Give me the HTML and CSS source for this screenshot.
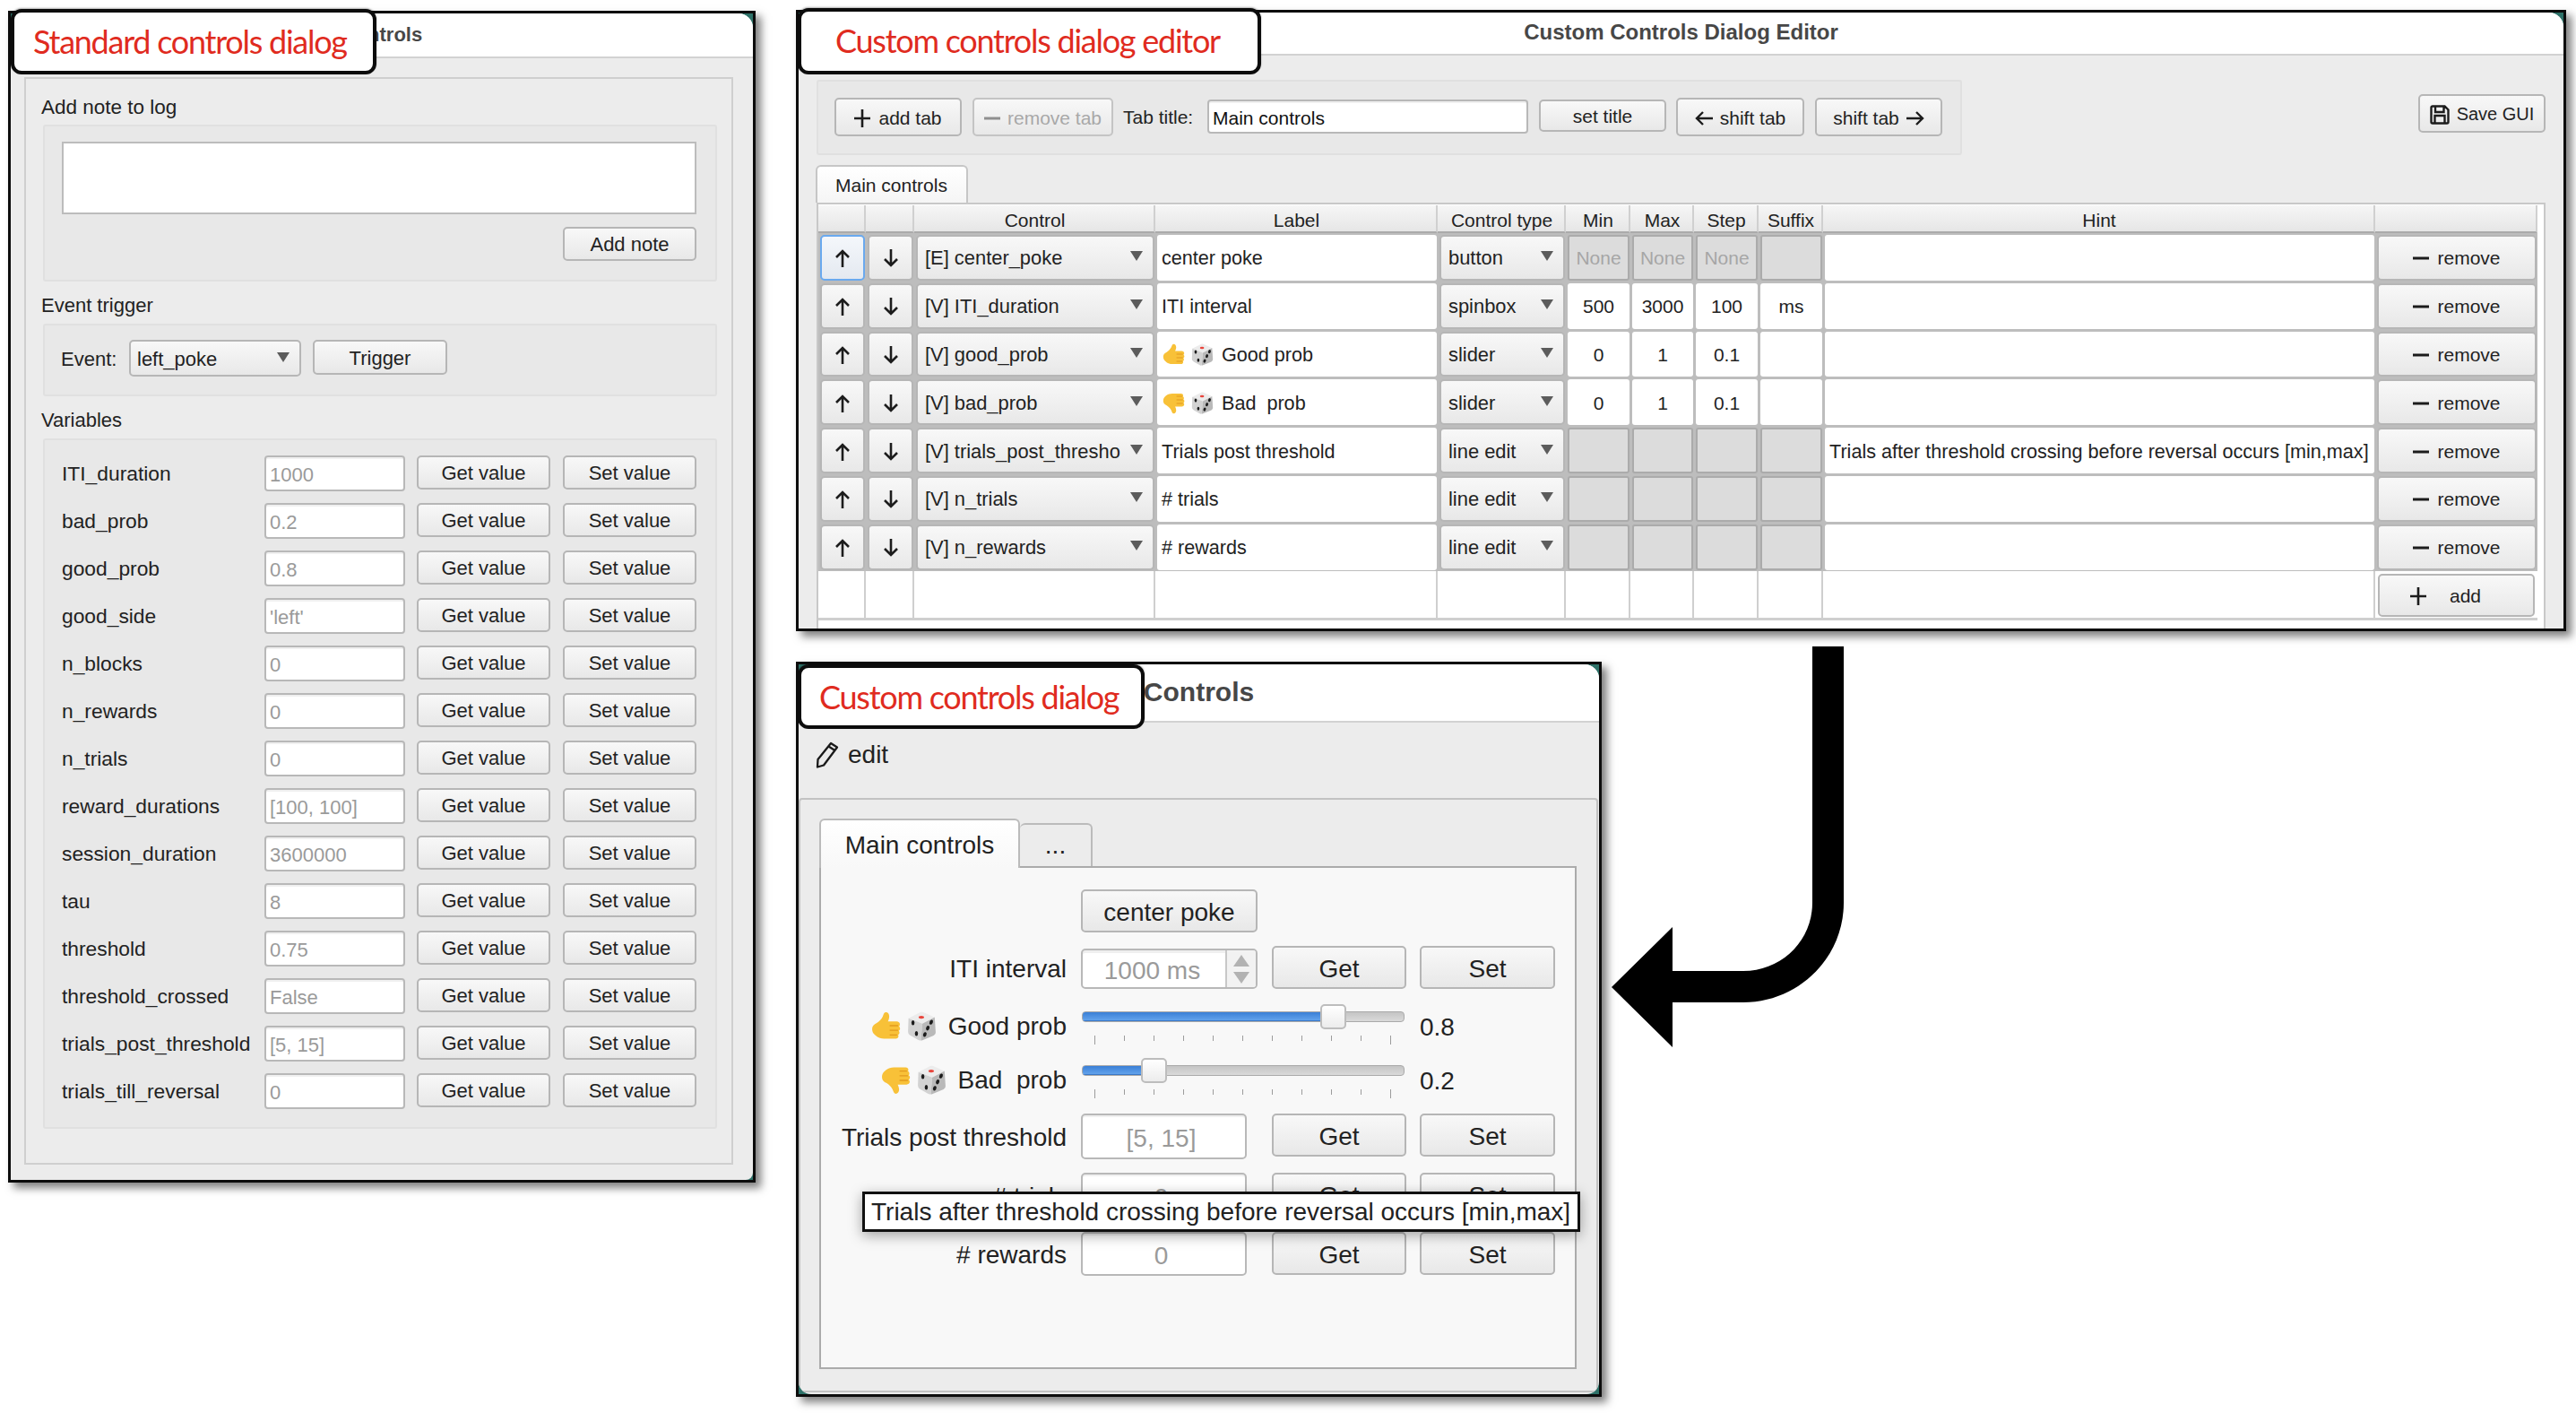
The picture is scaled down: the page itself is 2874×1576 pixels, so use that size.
FILE: index.html
```html
<!DOCTYPE html>
<html lang="en">
<head>
<meta charset="utf-8">
<title>Controls dialogs</title>
<link rel="stylesheet" href="styles.css">
</head>
<body>
<svg class="defs" width="0" height="0" aria-hidden="true">
  <symbol id="i-up" viewBox="0 0 18 20"><path d="M9 20V2M2 9l7-7 7 7" fill="none" stroke="currentColor" stroke-width="2.6"/></symbol>
  <symbol id="i-down" viewBox="0 0 18 20"><path d="M9 0v18M2 11l7 7 7-7" fill="none" stroke="currentColor" stroke-width="2.6"/></symbol>
  <symbol id="i-left" viewBox="0 0 20 18"><path d="M20 9H2M9 2L2 9l7 7" fill="none" stroke="currentColor" stroke-width="2.4"/></symbol>
  <symbol id="i-right" viewBox="0 0 20 18"><path d="M0 9h18M11 2l7 7-7 7" fill="none" stroke="currentColor" stroke-width="2.4"/></symbol>
  <symbol id="i-plus" viewBox="0 0 18 20"><path d="M9 0v20M0 10h18" fill="none" stroke="currentColor" stroke-width="2.6"/></symbol>
  <symbol id="i-minus" viewBox="0 0 18 20"><path d="M0 10h18" fill="none" stroke="currentColor" stroke-width="3"/></symbol>
  <symbol id="i-save" viewBox="0 0 22 22"><path d="M3 1.500h13.500l4 4V19a1.500 1.500 0 0 1-1.500 1.500H3A1.500 1.500 0 0 1 1.500 19V3A1.500 1.500 0 0 1 3 1.500zM6 1.500v6.500h9.500V1.500M5.500 20.500v-8.500h11v8.500" fill="none" stroke="currentColor" stroke-width="2.400"/></symbol>
  <symbol id="i-pencil" viewBox="0 0 28 30"><path d="M2 28.500L2.500 20 17 2l7 4.500L9 26.500zM14.500 5.500l7 4.500" fill="none" stroke="currentColor" stroke-width="2.300" stroke-linejoin="round"/></symbol>
  <symbol id="i-thumb" viewBox="0 0 32 32"><path d="M1 19c0-3 2-5 5-6.500 3-2 5-4 6.500-7C13.500 3 14 1 16 1s3.500 2 3.500 4.500c0 2-.7 4-1.500 5.500h9.500c2 0 3.500 1.300 3.500 3 0 1-.5 1.800-1 2.300.8.600 1.200 1.400 1.200 2.300 0 1-.6 1.900-1.400 2.400.5.500.8 1.200.8 2 0 1.100-.7 2-1.500 2.400.3.500.4 1 .4 1.500 0 1.600-1.300 2.600-3 2.600H14c-3.500 0-6-1-8-2.300C3 25 1 23 1 19z" fill="#f8c138"/><path d="M20 15.500h9M20 20.500h9M20 25.500h8" fill="none" stroke="#e29a1e" stroke-width="1.300"/></symbol>
  <symbol id="i-dice" viewBox="2 1.500 29 30"><path d="M3 8.500L15 2.500c1-.5 2-.5 3 0L29 7.500 17 14 4 9z" fill="#ececec"/><path d="M3 8.500L17 14l-1.500 16.500c-.5.700-1.500.700-2.500.2L5 26c-1.500-.8-2.500-2-2.500-4z" fill="#d2d2d2"/><path d="M17 14L29.500 7.500l1 15c0 1.500-.5 2.500-2 3.500l-12 5c-.5.200-1 .200-1 0z" fill="#b9b9b9"/><ellipse cx="16" cy="7.500" rx="2.800" ry="1.500" fill="#e8453c"/><ellipse cx="7.500" cy="13" rx="1.600" ry="2.500" fill="#1c1c1c"/><ellipse cx="11" cy="24" rx="1.600" ry="2.500" fill="#1c1c1c"/><ellipse cx="26" cy="12.500" rx="1.700" ry="2.500" fill="#1c1c1c" transform="rotate(20 26 12.500)"/><ellipse cx="22.500" cy="18.500" rx="1.700" ry="2.500" fill="#1c1c1c" transform="rotate(20 22.500 18.500)"/><ellipse cx="19.500" cy="25" rx="1.700" ry="2.500" fill="#1c1c1c" transform="rotate(20 19.500 25)"/></symbol>
</svg>

<main class="canvas">

  <section class="window win-standard">
    <div class="win-inner">
      <header class="titlebar title-small">Controls</header>
      <div class="std-body">
        <div class="std-frame">
          <div class="group-label first">Add note to log</div>
          <div class="group note-group">
            <div class="note-area"></div>
            <button class="btn note-btn">Add note</button>
          </div>
          <div class="group-label">Event trigger</div>
          <div class="group event-group">
            <span class="event-label">Event:</span>
            <div class="combo event-combo">left_poke</div>
            <button class="btn trigger-btn">Trigger</button>
          </div>
          <div class="group-label">Variables</div>
          <div class="group var-group">
            <div class="var-row"><span class="var-name">ITI_duration</span><div class="field var-field">1000</div><button class="btn var-get">Get value</button><button class="btn var-set">Set value</button></div>
            <div class="var-row"><span class="var-name">bad_prob</span><div class="field var-field">0.2</div><button class="btn var-get">Get value</button><button class="btn var-set">Set value</button></div>
            <div class="var-row"><span class="var-name">good_prob</span><div class="field var-field">0.8</div><button class="btn var-get">Get value</button><button class="btn var-set">Set value</button></div>
            <div class="var-row"><span class="var-name">good_side</span><div class="field var-field">'left'</div><button class="btn var-get">Get value</button><button class="btn var-set">Set value</button></div>
            <div class="var-row"><span class="var-name">n_blocks</span><div class="field var-field">0</div><button class="btn var-get">Get value</button><button class="btn var-set">Set value</button></div>
            <div class="var-row"><span class="var-name">n_rewards</span><div class="field var-field">0</div><button class="btn var-get">Get value</button><button class="btn var-set">Set value</button></div>
            <div class="var-row"><span class="var-name">n_trials</span><div class="field var-field">0</div><button class="btn var-get">Get value</button><button class="btn var-set">Set value</button></div>
            <div class="var-row"><span class="var-name">reward_durations</span><div class="field var-field">[100, 100]</div><button class="btn var-get">Get value</button><button class="btn var-set">Set value</button></div>
            <div class="var-row"><span class="var-name">session_duration</span><div class="field var-field">3600000</div><button class="btn var-get">Get value</button><button class="btn var-set">Set value</button></div>
            <div class="var-row"><span class="var-name">tau</span><div class="field var-field">8</div><button class="btn var-get">Get value</button><button class="btn var-set">Set value</button></div>
            <div class="var-row"><span class="var-name">threshold</span><div class="field var-field">0.75</div><button class="btn var-get">Get value</button><button class="btn var-set">Set value</button></div>
            <div class="var-row"><span class="var-name">threshold_crossed</span><div class="field var-field">False</div><button class="btn var-get">Get value</button><button class="btn var-set">Set value</button></div>
            <div class="var-row"><span class="var-name">trials_post_threshold</span><div class="field var-field">[5, 15]</div><button class="btn var-get">Get value</button><button class="btn var-set">Set value</button></div>
            <div class="var-row"><span class="var-name">trials_till_reversal</span><div class="field var-field">0</div><button class="btn var-get">Get value</button><button class="btn var-set">Set value</button></div>
          </div>
        </div>
      </div>
    </div>
  </section>

  <section class="window win-editor">
    <div class="win-inner">
      <header class="titlebar title-editor">Custom Controls Dialog Editor</header>
      <div class="ed-body">
        <div class="ed-top">
          <div class="group ed-tools">
            <button class="btn t-add"><svg class="ic ic-18"><use href="#i-plus"/></svg>add tab</button>
            <button class="btn t-remove"><svg class="ic ic-18"><use href="#i-minus"/></svg>remove tab</button>
            <span class="t-label">Tab title:</span>
            <div class="field t-input">Main controls</div>
            <button class="btn t-set">set title</button>
            <button class="btn t-shift"><svg class="ic ic-20"><use href="#i-left"/></svg>shift tab</button>
            <button class="btn t-shift t-shift-r">shift tab<svg class="ic ic-20"><use href="#i-right"/></svg></button>
          </div>
          <button class="btn t-save"><svg class="ic ic-save"><use href="#i-save"/></svg>Save GUI</button>
        </div>
        <div class="ed-tab">Main controls</div>
        <div class="ed-pane">
          <div class="table">
            <div class="hc"></div><div class="hc"></div><div class="hc">Control</div><div class="hc">Label</div><div class="hc">Control type</div><div class="hc">Min</div><div class="hc">Max</div><div class="hc">Step</div><div class="hc">Suffix</div><div class="hc">Hint</div><div class="hc"></div>

            <div class="cell"><button class="btn w focus"><svg class="ic ic-18"><use href="#i-up"/></svg></button></div><div class="cell"><button class="btn w"><svg class="ic ic-18"><use href="#i-down"/></svg></button></div><div class="cell"><div class="combo w">[E] center_poke</div></div><div class="cell"><div class="edit w">center poke</div></div><div class="cell"><div class="combo w">button</div></div><div class="cell"><div class="edit w num off">None</div></div><div class="cell"><div class="edit w num off">None</div></div><div class="cell"><div class="edit w num off">None</div></div><div class="cell"><div class="edit w num off"></div></div><div class="cell"><div class="edit w"></div></div><div class="cell"><button class="btn w rm"><svg class="ic ic-18"><use href="#i-minus"/></svg>remove</button></div>

            <div class="cell"><button class="btn w"><svg class="ic ic-18"><use href="#i-up"/></svg></button></div><div class="cell"><button class="btn w"><svg class="ic ic-18"><use href="#i-down"/></svg></button></div><div class="cell"><div class="combo w">[V] ITI_duration</div></div><div class="cell"><div class="edit w">ITI interval</div></div><div class="cell"><div class="combo w">spinbox</div></div><div class="cell"><div class="edit w num">500</div></div><div class="cell"><div class="edit w num">3000</div></div><div class="cell"><div class="edit w num">100</div></div><div class="cell"><div class="edit w num">ms</div></div><div class="cell"><div class="edit w"></div></div><div class="cell"><button class="btn w rm"><svg class="ic ic-18"><use href="#i-minus"/></svg>remove</button></div>

            <div class="cell"><button class="btn w"><svg class="ic ic-18"><use href="#i-up"/></svg></button></div><div class="cell"><button class="btn w"><svg class="ic ic-18"><use href="#i-down"/></svg></button></div><div class="cell"><div class="combo w">[V] good_prob</div></div><div class="cell"><div class="edit w emoji-edit"><svg class="emo"><use href="#i-thumb"/></svg><svg class="emo"><use href="#i-dice"/></svg><span class="emo-text">Good prob</span></div></div><div class="cell"><div class="combo w">slider</div></div><div class="cell"><div class="edit w num">0</div></div><div class="cell"><div class="edit w num">1</div></div><div class="cell"><div class="edit w num">0.1</div></div><div class="cell"><div class="edit w num"></div></div><div class="cell"><div class="edit w"></div></div><div class="cell"><button class="btn w rm"><svg class="ic ic-18"><use href="#i-minus"/></svg>remove</button></div>

            <div class="cell"><button class="btn w"><svg class="ic ic-18"><use href="#i-up"/></svg></button></div><div class="cell"><button class="btn w"><svg class="ic ic-18"><use href="#i-down"/></svg></button></div><div class="cell"><div class="combo w">[V] bad_prob</div></div><div class="cell"><div class="edit w emoji-edit"><svg class="emo flip"><use href="#i-thumb"/></svg><svg class="emo"><use href="#i-dice"/></svg><span class="emo-text">Bad  prob</span></div></div><div class="cell"><div class="combo w">slider</div></div><div class="cell"><div class="edit w num">0</div></div><div class="cell"><div class="edit w num">1</div></div><div class="cell"><div class="edit w num">0.1</div></div><div class="cell"><div class="edit w num"></div></div><div class="cell"><div class="edit w"></div></div><div class="cell"><button class="btn w rm"><svg class="ic ic-18"><use href="#i-minus"/></svg>remove</button></div>

            <div class="cell"><button class="btn w"><svg class="ic ic-18"><use href="#i-up"/></svg></button></div><div class="cell"><button class="btn w"><svg class="ic ic-18"><use href="#i-down"/></svg></button></div><div class="cell"><div class="combo w">[V] trials_post_thresho</div></div><div class="cell"><div class="edit w">Trials post threshold</div></div><div class="cell"><div class="combo w">line edit</div></div><div class="cell"><div class="edit w off"></div></div><div class="cell"><div class="edit w off"></div></div><div class="cell"><div class="edit w off"></div></div><div class="cell"><div class="edit w off"></div></div><div class="cell"><div class="edit w">Trials after threshold crossing before reversal occurs [min,max]</div></div><div class="cell"><button class="btn w rm"><svg class="ic ic-18"><use href="#i-minus"/></svg>remove</button></div>

            <div class="cell"><button class="btn w"><svg class="ic ic-18"><use href="#i-up"/></svg></button></div><div class="cell"><button class="btn w"><svg class="ic ic-18"><use href="#i-down"/></svg></button></div><div class="cell"><div class="combo w">[V] n_trials</div></div><div class="cell"><div class="edit w"># trials</div></div><div class="cell"><div class="combo w">line edit</div></div><div class="cell"><div class="edit w off"></div></div><div class="cell"><div class="edit w off"></div></div><div class="cell"><div class="edit w off"></div></div><div class="cell"><div class="edit w off"></div></div><div class="cell"><div class="edit w"></div></div><div class="cell"><button class="btn w rm"><svg class="ic ic-18"><use href="#i-minus"/></svg>remove</button></div>

            <div class="cell"><button class="btn w"><svg class="ic ic-18"><use href="#i-up"/></svg></button></div><div class="cell"><button class="btn w"><svg class="ic ic-18"><use href="#i-down"/></svg></button></div><div class="cell"><div class="combo w">[V] n_rewards</div></div><div class="cell"><div class="edit w"># rewards</div></div><div class="cell"><div class="combo w">line edit</div></div><div class="cell"><div class="edit w off"></div></div><div class="cell"><div class="edit w off"></div></div><div class="cell"><div class="edit w off"></div></div><div class="cell"><div class="edit w off"></div></div><div class="cell"><div class="edit w"></div></div><div class="cell"><button class="btn w rm"><svg class="ic ic-18"><use href="#i-minus"/></svg>remove</button></div>

            <div class="empty"></div><div class="empty"></div><div class="empty"></div><div class="empty"></div><div class="empty"></div><div class="empty"></div><div class="empty"></div><div class="empty"></div><div class="empty"></div><div class="empty"></div><div class="empty add-cell"><button class="btn w add"><svg class="ic ic-18"><use href="#i-plus"/></svg>add</button></div>
          </div>
        </div>
      </div>
    </div>
  </section>

  <section class="window win-custom">
    <div class="win-inner">
      <header class="titlebar title-large">Controls</header>
      <div class="cu-body">
        <div class="cu-edit"><svg class="ic-pencil"><use href="#i-pencil"/></svg>edit</div>
        <div class="cu-frame">
          <div class="cu-tabs">
            <div class="cu-tab active">Main controls</div>
            <div class="cu-tab more">...</div>
          </div>
          <div class="cu-pane">
            <div class="cu-row r-center"><span class="cu-label"></span><button class="btn cu-poke">center poke</button></div>
            <div class="cu-row r-48"><span class="cu-label">ITI interval</span>
              <div class="spin"><span class="spin-val">1000 ms</span><span class="spin-btns"><i class="tri-up"></i><i class="tri-down"></i></span></div>
              <button class="btn cu-get">Get</button><button class="btn cu-set">Set</button></div>
            <div class="cu-row slider-row first-slider"><span class="cu-label emo-label"><svg class="emo-lg"><use href="#i-thumb"/></svg><svg class="emo-lg"><use href="#i-dice"/></svg><span class="emo-lt">Good prob</span></span>
              <div class="slider"><div class="groove"><div class="fill" style="width:78%"></div></div><div class="handle" style="left:266px"></div><div class="ticks"><i class="long"></i><i></i><i></i><i></i><i></i><i></i><i></i><i></i><i></i><i></i><i class="long"></i></div></div>
              <span class="slider-val">0.8</span></div>
            <div class="cu-row slider-row second-slider"><span class="cu-label emo-label"><svg class="emo-lg flip"><use href="#i-thumb"/></svg><svg class="emo-lg"><use href="#i-dice"/></svg><span class="emo-lt">Bad  prob</span></span>
              <div class="slider"><div class="groove"><div class="fill" style="width:22%"></div></div><div class="handle" style="left:66px"></div><div class="ticks"><i class="long"></i><i></i><i></i><i></i><i></i><i></i><i></i><i></i><i></i><i></i><i class="long"></i></div></div>
              <span class="slider-val">0.2</span></div>
            <div class="cu-row r-51"><span class="cu-label">Trials post threshold</span><div class="field cu-field">[5, 15]</div><button class="btn cu-get wide">Get</button><button class="btn cu-set">Set</button></div>
            <div class="cu-row r-51"><span class="cu-label"># trials</span><div class="field cu-field">0</div><button class="btn cu-get wide">Get</button><button class="btn cu-set">Set</button></div>
            <div class="cu-row r-49"><span class="cu-label"># rewards</span><div class="field cu-field">0</div><button class="btn cu-get wide">Get</button><button class="btn cu-set">Set</button></div>
          </div>
        </div>
      </div>
    </div>
  </section>

  <div class="tooltip">Trials after threshold crossing before reversal occurs [min,max]</div>

  <div class="callout call-standard">Standard controls dialog</div>
  <div class="callout call-editor">Custom controls dialog editor</div>
  <div class="callout call-custom">Custom controls dialog</div>

  <svg class="flow-arrow" viewBox="1798 721 259 447"><path d="M2022 721H2057V1007C2057 1068 2007 1118 1945 1118H1866V1168L1798 1101L1866 1034V1083H1945C1988 1083 2022 1049 2022 1007Z"/></svg>
</main>
</body>
</html>
```

FILE: styles.css
```css
* { box-sizing: border-box; }
html, body { margin: 0; padding: 0; background: #fff; }
body { font-family: "Liberation Sans", Arial, sans-serif; color: #222; }
.defs { position: absolute; }
.canvas { position: relative; width: 2874px; height: 1576px; overflow: hidden; }

/* windows on the desktop */
.window { position: absolute; border: 3px solid #0c0c0c; background: #2e7269; box-shadow: 6px 6px 9px rgba(0,0,0,.5); }
.win-inner { height: 100%; background: #ececec; display: flex; flex-direction: column; overflow: hidden; }
.win-standard { left: 9px; top: 12px; width: 834px; height: 1307px; }
.win-standard .win-inner { border-radius: 14px 16px 8px 0; }
.win-editor { left: 888px; top: 11px; width: 1975px; height: 693px; }
.win-editor .win-inner { border-radius: 14px 16px 0 0; }
.win-custom { left: 888px; top: 738px; width: 899px; height: 820px; }
.win-custom .win-inner { border-radius: 14px 16px 14px 14px; }

.titlebar { flex: none; background: #fff; border-bottom: 2px solid #d2d2d2; display: flex; align-items: center; justify-content: center; font-weight: 700; color: #474747; }
.title-small { height: 50px; font-size: 22px; }
.title-editor { height: 48px; font-size: 24px; padding-bottom: 3px; }
.title-large { height: 65px; font-size: 30px; padding-bottom: 1px; }

/* shared widgets */
.btn { font: inherit; color: #222; margin: 0; padding: 2px 0 0; border: 2px solid #b6b6b6; border-radius: 5px; background: linear-gradient(#f8f8f8, #e8e8e8); display: flex; align-items: center; justify-content: center; }
.field { background: #fff; border: 2px solid #b8b8b8; border-radius: 4px; color: #9a9a9a; display: flex; align-items: center; padding: 3px 0 0 4px; box-shadow: inset 0 2px 0 #f0f0f0; }
.combo { position: relative; border: 2px solid #b6b6b6; border-radius: 5px; background: linear-gradient(#f8f8f8, #e8e8e8); display: flex; align-items: center; padding: 2px 0 0 7px; white-space: nowrap; }
.combo::after { content: ""; position: absolute; right: 11px; top: 50%; margin-top: -7px; border-style: solid; border-width: 11px 7px 0; border-color: #5c5c5c transparent transparent; }
.ic { flex: none; color: #1c1c1c; }
.ic-18 { width: 18px; height: 20px; }
.ic-20 { width: 20px; height: 18px; }
.ic-save { width: 22px; height: 22px; }

/* standard dialog */
.std-body { flex: 1; padding: 21px 22px 17px 15px; min-height: 0; }
.std-frame { height: 100%; border: 2px solid #cfcfcf; padding: 0 16px 0 19px; font-size: 22px; }
.group-label { height: 24px; line-height: 24px; margin: 15px 0 8px -2px; }
.group-label.first { margin: 20px 0 7px -2px; font-size: 22.5px; }
.group { background: #e8e8e8; border: 2px solid #e0e0e0; border-radius: 3px; }
.note-group { height: 175px; padding: 17px 21px 0 19px; display: flex; flex-direction: column; }
.note-area { height: 81px; flex: none; background: #fff; border: 2px solid #bcbcbc; }
.note-btn { width: 149px; height: 38px; margin: 14px 0 0 auto; }
.event-group { height: 81px; padding: 16px 0 0 19px; display: flex; align-items: flex-start; }
.event-label { width: 75px; height: 41px; display: flex; align-items: center; padding-top: 2px; margin-left: -1px; }
.event-combo { width: 192px; height: 41px; margin-left: 1px; }
.trigger-btn { width: 150px; height: 39px; margin-left: 13px; }
.var-group { height: 770px; padding: 17px 0 0 19px; display: flex; flex-direction: column; gap: 13px; }
.var-row { display: flex; align-items: flex-start; height: 40px; }
.var-name { width: 226px; height: 40px; display: flex; align-items: center; white-space: nowrap; font-size: 22.8px; padding-top: 1px; }
.var-field { width: 157px; height: 40px; }
.var-get { width: 149px; height: 38px; margin-left: 13px; }
.var-set { width: 149px; height: 38px; margin-left: 14px; }

/* editor */
.ed-body { flex: 1; min-height: 0; padding: 27px 0 0 19px; font-size: 21px; display: flex; flex-direction: column; }
.ed-top { display: flex; align-items: flex-start; height: 84px; flex: none; }
.ed-tools { width: 1278px; height: 84px; margin-left: 1px; padding: 18px 0 0 18px; display: flex; align-items: flex-start; }
.ed-tools > * { height: 43px; }
.t-add { width: 142px; gap: 9px; }
.t-remove { width: 157px; gap: 8px; margin-left: 12px; color: #a8a8a8; border-color: #c4c4c4; }
.t-remove .ic { color: #8f8f8f; }
.t-label { margin-left: 11px; width: 94px; display: flex; align-items: center; white-space: nowrap; }
.t-input { width: 358px; height: 38px; margin-top: 2px; color: #111; padding: 3px 0 0 4px; }
.t-set { width: 142px; height: 36px; margin: 2px 0 0 12px; }
.t-shift { width: 143px; gap: 8px; margin-left: 11px; }
.t-shift-r { width: 142px; margin-left: 12px; }
.t-save { width: 142px; height: 43px; margin: 16px 20px 0 auto; gap: 8px; font-size: 20px; }
.ed-tab { flex: none; width: 170px; height: 42px; margin-top: 11px; padding: 2px 0 0 20px; display: flex; align-items: center; background: linear-gradient(#fff, #f5f5f5); border: 2px solid #c6c6c6; border-bottom: 0; border-radius: 6px 6px 0 0; position: relative; z-index: 1; }
.ed-pane { flex: 1; min-height: 0; margin: 0 20px 0 1px; background: #fff; border: 2px solid #c8c8c8; border-bottom: 0; padding: 1px 0 0 0; }
.table { display: grid; grid-template-columns: 53px 54px 269px 315px 143px 72px 71px 72px 72px 616px 181px; grid-template-rows: 31px repeat(7, 53.8px) 55px; background: #bdbdbd; width: 1918px; }
.hc { background: linear-gradient(#f6f6f6, #e6e6e6); border-right: 2px solid #d0d0d0; border-bottom: 2px solid #ababab; text-align: center; line-height: 29px; padding: 2px 0 0 2px; white-space: nowrap; overflow: hidden; }
.cell { padding: 2px 1px 1px 2px; min-width: 0; }
.cell .combo { font-size: 21.9px; padding-left: 8px; }
.cell .edit { font-size: 21.6px; }
.w { width: 100%; height: 100%; }
.edit { background: #fff; border-radius: 3px; display: flex; align-items: center; padding: 2px 0 0 5px; white-space: pre; }
.num { justify-content: center; padding-left: 0; }
.cell .num { font-size: 21px; }
.off { background: #dcdcdc; border: 2px solid #ababab; color: #a6a6a6; }
.focus { border-color: #6aa9ee; background: linear-gradient(#f4f7fb, #e4e9f0); }
.rm { gap: 9px; }
.add { gap: 26px; padding-right: 24px; }
.empty { background: #fff; border-right: 2px solid #cfcfcf; border-bottom: 3px solid #cfcfcf; }
.add-cell { border-right: 0; padding: 3px 3px 1px 3px; }
.emo { width: 25px; height: 25px; flex: none; }
.emoji-edit { gap: 7px; padding-left: 6px; }
.emo-text { margin-left: 2px; }
.flip { transform: scaleY(-1); }

/* custom dialog */
.cu-body { flex: 1; min-height: 0; padding: 0; font-size: 28px; display: flex; flex-direction: column; }
.cu-edit { flex: none; height: 84px; padding: 22px 0 0 19px; display: flex; align-items: flex-start; gap: 8px; line-height: 28px; color: #222; }
.ic-pencil { width: 28px; height: 30px; color: #1a1a1a; margin-top: -1px; }
.cu-frame { flex: 1; min-height: 0; margin-bottom: 2px; margin-right: 1px; border: 2px solid #c2c2c2; border-radius: 4px; padding: 21px 22px 0 21px; display: flex; flex-direction: column; }
.cu-tabs { display: flex; align-items: flex-start; height: 53px; flex: none; position: relative; z-index: 1; }
.cu-tab { display: flex; align-items: center; justify-content: center; border: 2px solid #bbb; border-radius: 6px 6px 0 0; }
.cu-tab.active { width: 224px; height: 55px; padding-top: 3px; background: linear-gradient(#fff, #f8f8f8); border-bottom: 0; }
.cu-tab.more { width: 81px; height: 48px; margin-top: 5px; background: #ececec; border-left: 0; border-bottom: 0; }
.cu-pane { height: 561px; flex: none; background: #f8f8f8; border: 2px solid #ababab; padding-top: 24px; display: flex; flex-direction: column; gap: 15px; }
.cu-pane .btn { padding-top: 4px; }
.cu-row { display: flex; align-items: flex-start; flex: none; }
.cu-label { width: 274px; flex: none; text-align: right; white-space: pre; display: flex; align-items: center; justify-content: flex-end; height: 100%; color: #222; padding-top: 3px; }
.r-center { height: 48px; }
.r-48 { height: 48px; }
.r-51 { height: 51px; }
.r-49 { height: 49px; }
.cu-poke { width: 197px; height: 48px; margin-left: 16px; }
.spin { width: 197px; height: 45px; margin: 3px 0 0 16px; background: #fff; border: 2px solid #b8b8b8; border-radius: 5px; display: flex; overflow: hidden; box-shadow: inset 0 3px 0 #efefef; }
.spin-val { flex: 1; display: flex; align-items: center; justify-content: center; color: #9a9a9a; padding-top: 5px; padding-right: 4px; }
.spin-btns { width: 34px; border-left: 2px solid #c8c8c8; background: #f2f2f2; display: flex; flex-direction: column; align-items: center; justify-content: center; gap: 6px; }
.tri-up { border-style: solid; border-width: 0 9px 13px; border-color: transparent transparent #b2b2b2; }
.tri-down { border-style: solid; border-width: 13px 9px 0; border-color: #b2b2b2 transparent transparent; }
.cu-get { width: 150px; height: 48px; margin-left: 16px; }
.cu-set { width: 151px; height: 48px; margin-left: 15px; }
.cu-get.wide { margin-left: 28px; }
.cu-field { width: 185px; margin-left: 16px; height: 100%; justify-content: center; padding: 5px 6px 0 0; border-radius: 5px; }
.slider-row { height: 45px; }
.first-slider { margin-top: 2px; }
.second-slider { margin-bottom: 2px; }
.emo-label { height: 45px; padding-top: 4px; }
.emo-lg { width: 33px; height: 33px; flex: none; }
.emo-label .emo-lg + .emo-lg { margin-left: 7px; }
.emo-lt { margin-left: 13px; }
.slider { position: relative; width: 360px; height: 45px; margin-left: 17px; flex: none; }
.groove { position: absolute; left: 0; right: 0; top: 8px; height: 12px; background: linear-gradient(#c4c4c4, #dadada); border: 1px solid #aaa; border-radius: 4px; overflow: hidden; }
.fill { height: 100%; background: linear-gradient(#3a7fd6, #66a6ee); box-shadow: inset 0 -1px 0 #3a78c8; }
.handle { position: absolute; top: 0; width: 29px; height: 28px; background: linear-gradient(#fff, #ececec); border: 2px solid #bdbdbd; border-radius: 5px; }
.ticks { position: absolute; left: 14px; width: 331px; top: 35px; display: flex; justify-content: space-between; align-items: flex-start; }
.ticks i { display: block; width: 1px; height: 6px; background: #9c9c9c; }
.ticks i.long { height: 10px; }
.slider-val { margin-left: 17px; height: 45px; padding-top: 12px; line-height: 28px; }

/* overlays */
.tooltip { position: absolute; left: 962px; top: 1329px; width: 801px; height: 45px; background: #fff; border: 3px solid #111; font-size: 28px; line-height: 39px; padding-left: 7px; white-space: nowrap; box-shadow: 0 4px 14px rgba(0,0,0,.35); color: #222; }
.callout { position: absolute; background: #fff; border: 4px solid #0c0c0c; border-radius: 12px; display: flex; align-items: center; color: #e02b20; font-family: Lato, "Liberation Sans", sans-serif; font-size: 36px; letter-spacing: -1.25px; white-space: nowrap; box-shadow: 0 -1px 2px rgba(0,0,0,.3); }
.call-standard { left: 12px; top: 10px; width: 408px; height: 73px; padding: 0 0 2px 21px; }
.call-editor { left: 890px; top: 9px; width: 517px; height: 74px; padding: 0 0 2px 38px; }
.call-custom { left: 890px; top: 741px; width: 387px; height: 72px; padding-left: 20px; }
.flow-arrow { position: absolute; left: 1798px; top: 721px; width: 259px; height: 447px; fill: #000; }
```
